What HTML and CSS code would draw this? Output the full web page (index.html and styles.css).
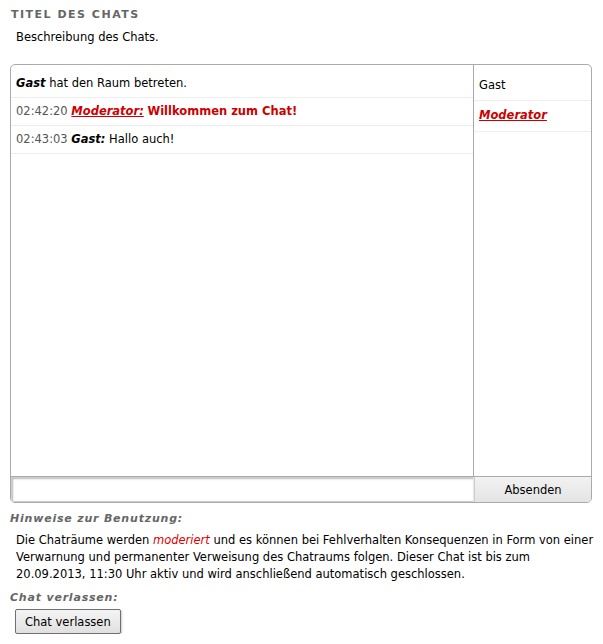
FILE: index.html
```html
<!DOCTYPE html>
<html>
<head>
<meta charset="utf-8">
<link rel="stylesheet" href="styles.css">
</head>
<body>
<div class="page">
  <h2 class="title">Titel des Chats</h2>
  <p class="desc">Beschreibung des Chats.</p>
  <div class="chat">
    <div class="main">
      <div class="messages">
        <div class="msg"><b class="it">Gast</b> hat den Raum betreten.</div>
        <div class="msg"><span class="time">02:42:20</span> <a class="mod">Moderator:</a> <span class="modtext">Willkommen zum Chat!</span></div>
        <div class="msg"><span class="time">02:43:03</span> <b class="it">Gast:</b> Hallo auch!</div>
      </div>
      <div class="users">
        <div class="user first">Gast</div>
        <div class="user"><a class="mod">Moderator</a></div>
      </div>
    </div>
    <div class="inputrow">
      <input class="field" type="text">
      <button class="send">Absenden</button>
    </div>
  </div>
  <h3 class="sub">Hinweise zur Benutzung:</h3>
  <p class="info">Die Chaträume werden <em class="red">moderiert</em> und es können bei Fehlverhalten Konsequenzen in Form von einer Verwarnung und permanenter Verweisung des Chatraums folgen. Dieser Chat ist bis zum 20.09.2013, 11:30 Uhr aktiv und wird anschließend automatisch geschlossen.</p>
  <h3 class="sub">Chat verlassen:</h3>
  <button class="leave">Chat verlassen</button>
</div>
</body>
</html>
```
FILE: styles.css
```css
html, body { margin: 0; padding: 0; background: #fff; }
body { font-family: "DejaVu Sans", Verdana, sans-serif; font-size: 11.5px; color: #000; }
.page { padding: 8px 11px 0 10px; }
.title { margin: 0 0 0 1px; font-size: 11px; font-weight: bold; letter-spacing: 1.5px; color: #666; text-transform: uppercase; line-height: 13px; }
.desc { margin: 9px 0 0 6px; line-height: 14px; }
.chat { margin-top: 20px; border: 1px solid #aaa; border-radius: 5px; overflow: hidden; }
.main { display: flex; height: 411px; }
.messages { flex: 1; padding-top: 5px; }
.msg { height: 27px; line-height: 27px; border-bottom: 1px solid #eee; padding-left: 5px; }
.it { font-style: italic; font-weight: bold; }
.time { color: #555; }
.mod { color: #c00; font-weight: bold; font-style: italic; text-decoration: underline; }
.modtext { color: #c00; font-weight: bold; }
.users { width: 117px; border-left: 1px solid #aaa; }
.user { height: 31px; line-height: 28px; border-bottom: 1px solid #eee; padding-left: 5px; box-sizing: border-box; }
.user.first { height: 36px; padding-top: 8px; line-height: 24px; }
.inputrow { display: flex; height: 25px; border-top: 1px solid #aaa; }
.field { flex: 1; margin: 0; border: 1px solid #ccc; border-right-color: #e8e8e8; box-shadow: inset 1px 1px 2px #bbb; padding: 0 4px; font: inherit; outline: none; }
.send { width: 117px; margin: 0; border: none; border-left: 1px solid #ccc; background: linear-gradient(#f2f2f2, #e4e4e4); font: inherit; color: #000; padding: 0; }
.sub { margin: 9px 0 0 0; font-size: 11px; font-weight: bold; font-style: italic; color: #666; line-height: 13px; letter-spacing: 0.8px; }
.info { margin: 7px -8px 0 6px; line-height: 17px; }
.info + .sub { margin-top: 8px; }
.red { color: #d00; }
.leave { margin: 5px 0 0 5px; height: 25px; padding: 0 9px; border: 1px solid #707070; border-radius: 2px; background: linear-gradient(#f4f4f4, #e0e0e0); font: inherit; font-size: 11.5px; color: #000; box-shadow: 1px 1px 2px #ccc; }
```
